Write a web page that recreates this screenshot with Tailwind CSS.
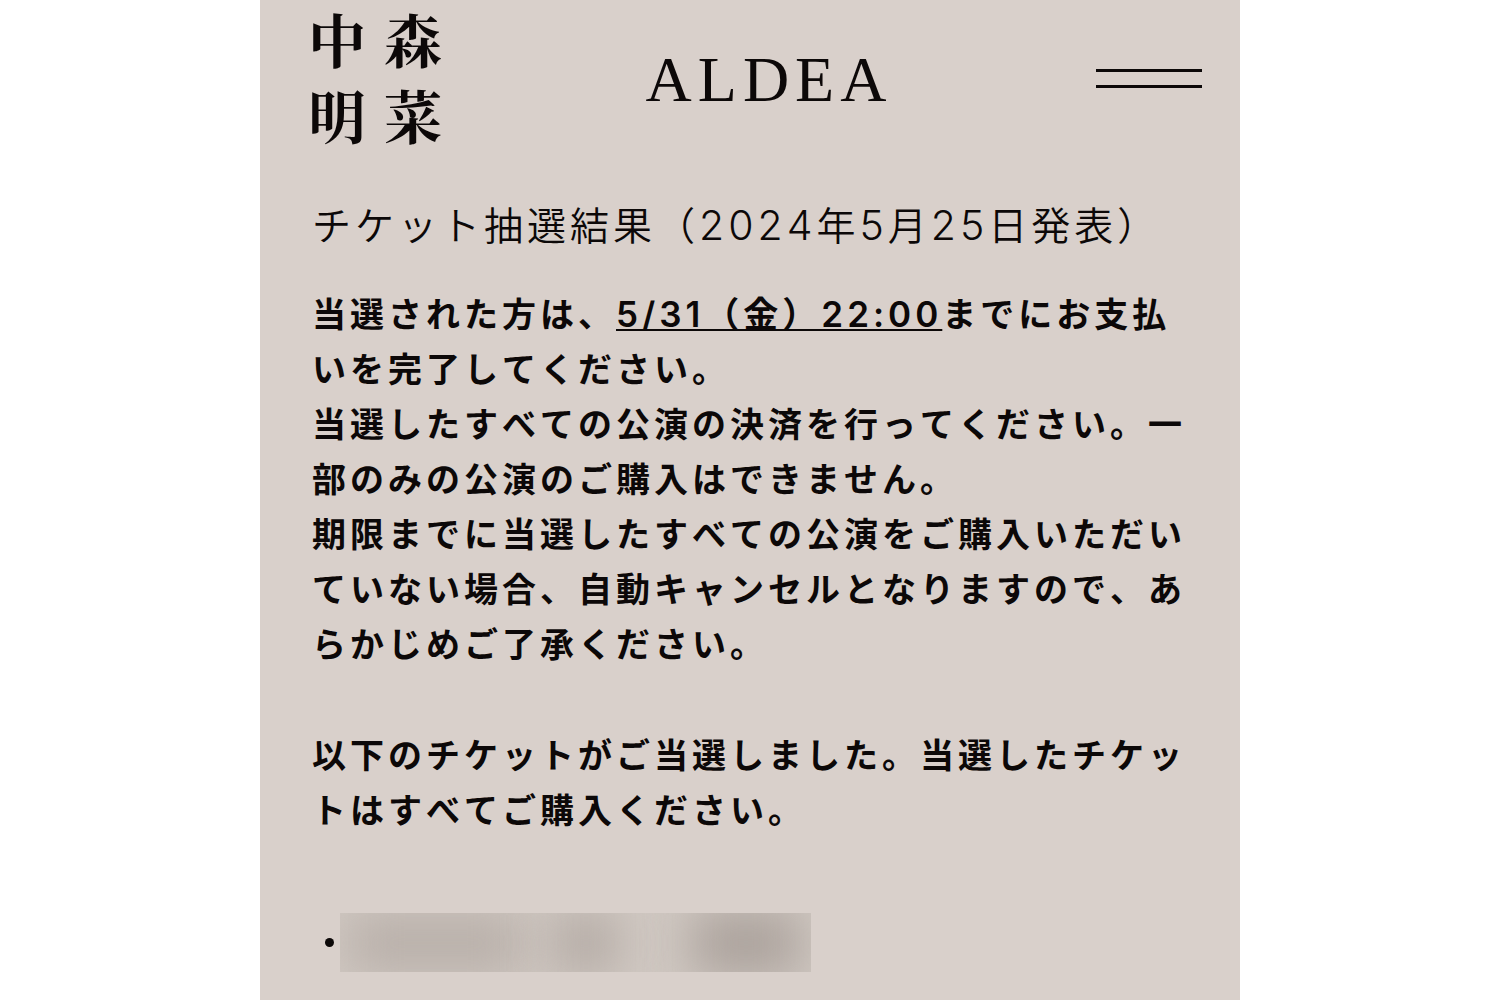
<!DOCTYPE html>
<html lang="ja">
<head>
    <meta charset="UTF-8">
    <meta name="viewport" content="width=device-width, initial-scale=1.0">
    <title>ALDEA</title>
    <script src="https://cdn.jsdelivr.net/npm/@tailwindcss/browser@4"></script>
</head>
<body class="bg-white font-['Inter','Noto_Sans_CJK_JP',sans-serif] text-[#0c0808] [font-kerning:none]">
    <div class="mx-auto w-full max-w-[980px] bg-[#d9d0cb] pb-7">
        <header class="grid grid-cols-[1fr_auto_1fr] items-center pl-12 pr-[38px]">
            <!-- Artist name -->
            <a href="#" class="grid w-fit grid-cols-2 gap-x-[18px] pb-1 font-['Noto_Serif_CJK_JP','Noto_Serif_JP','Noto_Sans_CJK_JP',serif] text-[58px] leading-[76px] font-bold">
                <span>中</span>
                <span>森</span>
                <span>明</span>
                <span>菜</span>
            </a>
            <a href="#" class="pt-1 pl-7 font-['Liberation_Serif',serif] text-[64px] leading-[76px] tracking-[6px]">ALDEA</a>
            <button type="button" aria-label="メニュー" class="flex w-[106px] flex-col gap-[13px] justify-self-end">
                <span class="h-[3px] w-full bg-[#0c0808]"></span>
                <span class="h-[3px] w-full bg-[#0c0808]"></span>
            </button>
        </header>

        <main class="px-[52px] pt-10">
            <h1 class="text-[39px] leading-[58px] font-[350] tracking-[4px]">チケット抽選結果（<span class="text-[41px]">2024</span>年<span class="text-[41px]">5</span>月<span class="text-[41px]">25</span>日発表）</h1>

            <div class="mt-8 text-[34px] leading-[55px] font-semibold tracking-[4px]">
                <p>
                    当選された方は、<span class="text-[35px] underline decoration-2 underline-offset-2">5/31（金）22:00</span>までにお支払いを完了してください。<br>
                    当選したすべての公演の決済を行ってください。一部のみの公演のご購入はできません。<br>
                    期限までに当選したすべての公演をご購入いただいていない場合、自動キャンセルとなりますので、あらかじめご了承ください。
                </p>
                <p class="mt-14">以下のチケットがご当選しました。当選したチケットはすべてご購入ください。</p>
            </div>

            <!-- Ticket list, name blurred out -->
            <ul class="mt-[75px]">
                <li class="flex items-center gap-[6px] pl-[13px]">
                    <span class="size-[9px] shrink-0 rounded-full bg-[#0c0808]"></span>
                    <div class="flex h-[59px] w-[471px] items-center overflow-hidden bg-[#d0c8c2]">
                        <div class="ml-2 h-14 w-[176px] shrink-0 bg-[#b7aea8] blur-xl"></div>
                        <div class="ml-8 h-14 w-[60px] shrink-0 bg-[#b0a7a1] blur-xl"></div>
                        <div class="ml-[76px] h-16 w-[108px] shrink-0 bg-[#aaa19b] blur-xl"></div>
                    </div>
                </li>
            </ul>
        </main>
    </div>
</body>
</html>
